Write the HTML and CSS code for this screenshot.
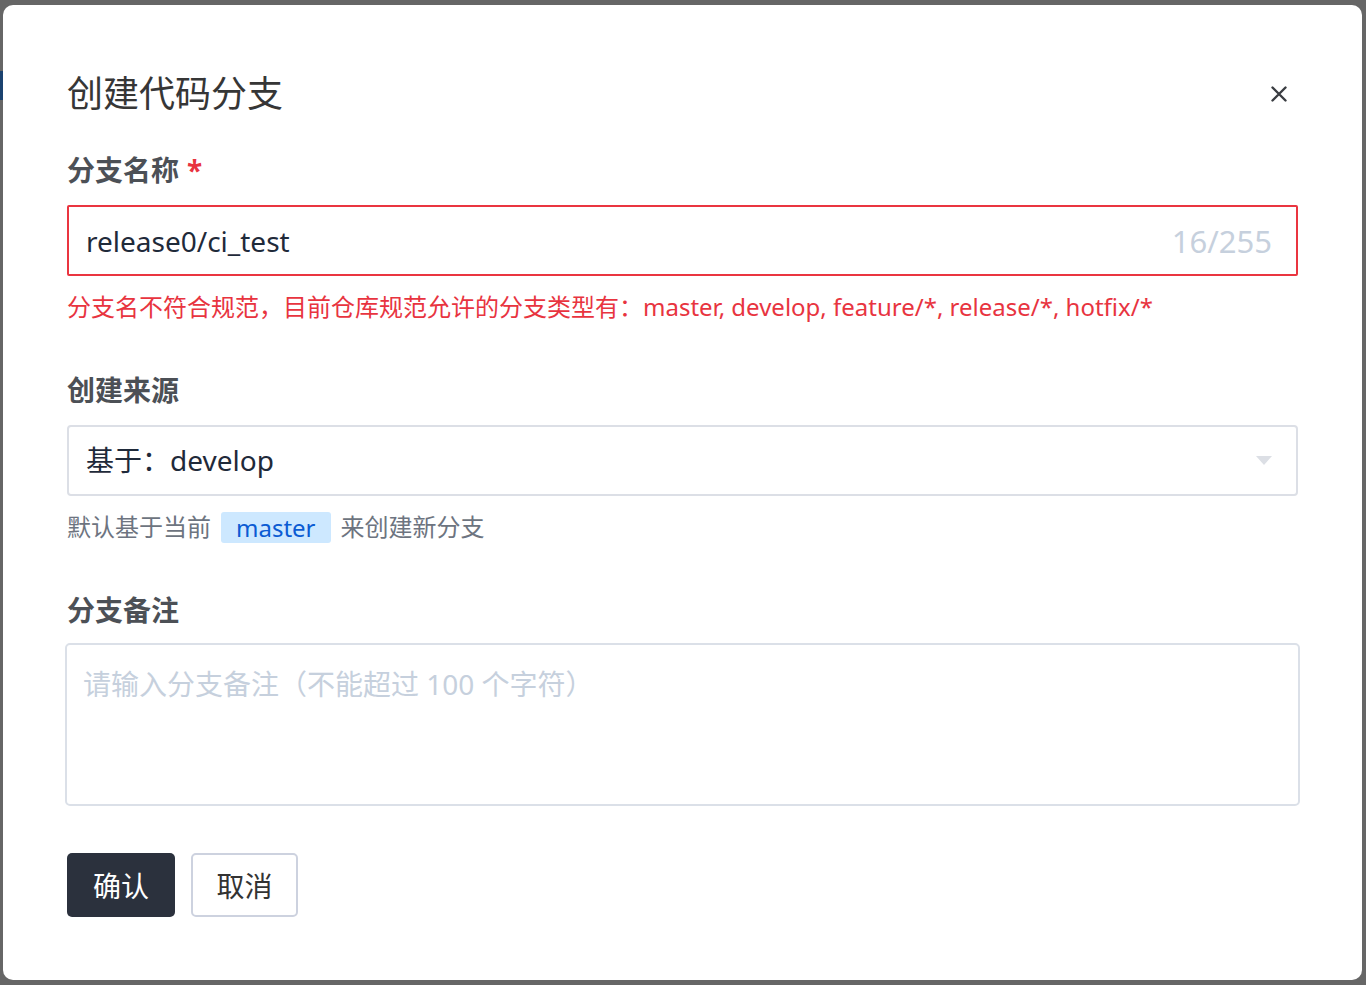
FILE: index.html
```html
<!DOCTYPE html>
<html lang="zh-CN">
<head>
<meta charset="utf-8">
<title>创建代码分支</title>
<link rel="stylesheet" href="styles.css">
</head>
<body>
<div class="backdrop-mark"></div>
<div class="modal">
  <div class="modal-header">
    <h1 class="modal-title">创建代码分支</h1>
    <button class="close-btn" aria-label="关闭">
      <svg width="16" height="16" viewBox="0 0 16 16"><path d="M1.5 1.5 L14.5 14.5 M14.5 1.5 L1.5 14.5" stroke="#3a3d42" stroke-width="2.4" stroke-linecap="round" fill="none"/></svg>
    </button>
  </div>

  <div class="field field-first">
    <div class="label">分支名称<span class="required">*</span></div>
    <div class="input input-error">
      <span class="input-value">release0/ci_test</span>
      <span class="counter">16/255</span>
    </div>
    <div class="error-text">分支名不符合规范，目前仓库规范允许的分支类型有：master, develop, feature/*, release/*, hotfix/*</div>
  </div>

  <div class="field field-second">
    <div class="label">创建来源</div>
    <div class="input select">
      <span class="input-value">基于：develop</span>
      <span class="caret"></span>
    </div>
    <div class="help-text">默认基于当前<span class="tag">master</span>来创建新分支</div>
  </div>

  <div class="field field-third">
    <div class="label label-tight">分支备注</div>
    <div class="textarea">
      <span class="placeholder">请输入分支备注（不能超过 100 个字符）</span>
    </div>
  </div>

  <div class="footer">
    <button class="btn btn-primary">确认</button>
    <button class="btn btn-default">取消</button>
  </div>
</div>
</body>
</html>
```

FILE: styles.css
```css
* { box-sizing: border-box; }

html, body {
  margin: 0;
  height: 985px;
  overflow: hidden;
}

body {
  background: #666666;
  padding: 5px 4px 5px 3px;
  font-family: "Noto Sans", "Noto Sans CJK SC", sans-serif;
  position: relative;
}

.backdrop-mark {
  position: absolute;
  left: 0;
  top: 71px;
  width: 3px;
  height: 29px;
  background: #1b426f;
}

.modal {
  background: #fff;
  border-radius: 10px;
  height: 975px;
  padding: 65px 64px 63px 64px;
  display: flex;
  flex-direction: column;
}

.modal-header {
  display: flex;
  align-items: center;
  justify-content: space-between;
  height: 48px;
}

.modal-title {
  margin: 0;
  font-size: 36px;
  line-height: 48px;
  font-weight: 400;
  color: #363636;
}

.close-btn {
  border: 0;
  background: transparent;
  padding: 0;
  margin-right: 11px;
  width: 16px;
  height: 16px;
  display: flex;
}

.field-first { margin-top: 32px; }
.field-second { margin-top: 47px; }
.field-third { margin-top: 47px; }

.label {
  font-size: 28px;
  line-height: 40px;
  font-weight: 700;
  color: #4c5056;
  margin-bottom: 15px;
}

.label-tight { margin-bottom: 13px; }
.field-second .label { margin-bottom: 15px; }

.required {
  color: #e8343f;
  margin-left: 8px;
}

.input {
  height: 71px;
  border: 2px solid #dcdfe6;
  border-radius: 4px;
  display: flex;
  align-items: center;
  justify-content: space-between;
  padding: 0 24px 0 17px;
  font-size: 28px;
}

.select {
  padding-bottom: 3px;
}

.input-error {
  border-color: #ea3540;
  border-radius: 2px;
}

.input-value {
  color: #1f2a3a;
}

.counter {
  color: #c6d0dd;
  font-size: 31px;
}

.caret {
  width: 0;
  height: 0;
  border-left: 8px solid transparent;
  border-right: 8px solid transparent;
  border-top: 9px solid #dcdfe5;
  margin-top: 2px;
}

.error-text {
  margin-top: 15px;
  font-size: 24px;
  line-height: 32px;
  color: #e8343f;
  white-space: nowrap;
}

.help-text {
  margin-top: 15px;
  font-size: 24px;
  line-height: 32px;
  color: #6d7480;
  display: flex;
  align-items: center;
}

.tag {
  background: #cde8ff;
  color: #0b5bd3;
  border-radius: 3px;
  padding: 0 15px;
  height: 31px;
  line-height: 31px;
  margin: 0 10px;
}

.textarea {
  margin: 0 -2px;
  height: 163px;
  border: 2px solid #dbe0e8;
  border-radius: 5px;
  padding: 19px 16px;
  font-size: 28px;
  line-height: 40px;
}

.placeholder {
  color: #c6d0dd;
}

.footer {
  margin-top: 47px;
  display: flex;
  gap: 16px;
}

.btn {
  height: 64px;
  width: 108px;
  font-family: inherit;
  font-size: 28px;
  border-radius: 5px;
  padding: 0;
}

.btn-primary {
  background: #2b313d;
  color: #fff;
  border: 0;
}

.btn-default {
  background: #fff;
  color: #333;
  border: 2px solid #cdd2df;
  width: 107px;
}
```
